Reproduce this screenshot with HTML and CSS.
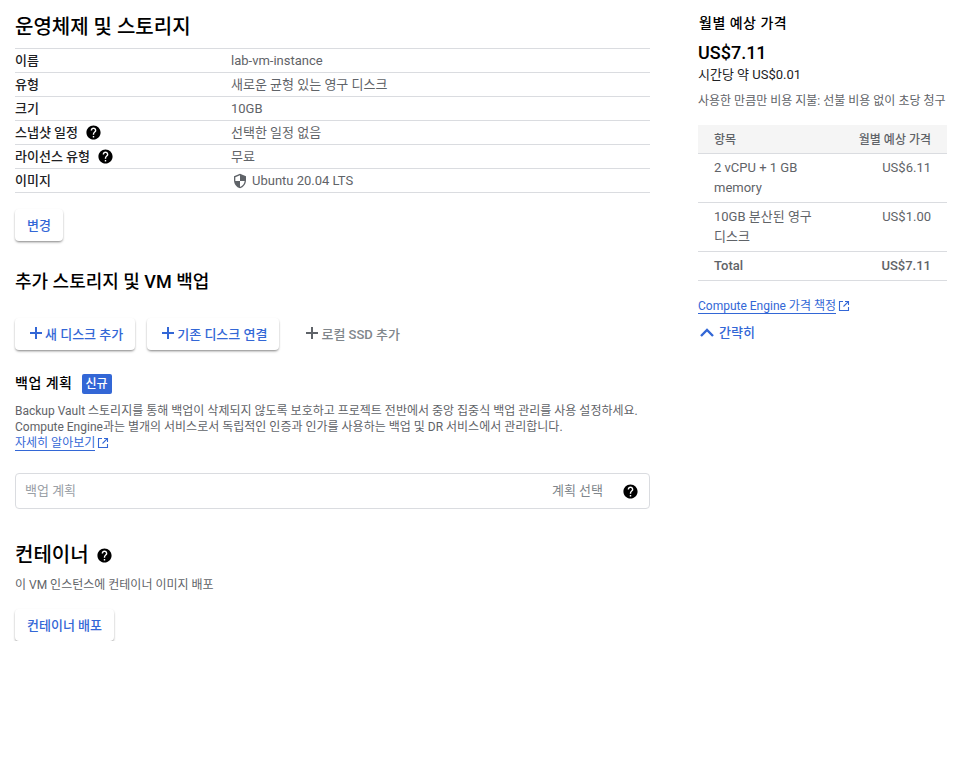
FILE: index.html
```html
<!DOCTYPE html>
<html lang="ko">
<head>
<meta charset="UTF-8">
<meta name="viewport" content="width=device-width, initial-scale=1.0">
<title>VM 인스턴스 만들기</title>
<link rel="stylesheet" href="styles.css">
</head>
<body>

<svg class="defs" aria-hidden="true">
  <symbol id="help" viewBox="0 0 24 24">
    <path d="M12 2C6.48 2 2 6.48 2 12s4.48 10 10 10 10-4.48 10-10S17.52 2 12 2zm1 17h-2v-2h2v2zm2.07-7.75l-.9.92C13.45 12.9 13 13.5 13 15h-2v-.5c0-1.1.45-2.1 1.17-2.83l1.24-1.26c.37-.36.59-.86.59-1.41 0-1.1-.9-2-2-2s-2 .9-2 2H8c0-2.21 1.79-4 4-4s4 1.79 4 4c0 .88-.36 1.68-.93 2.25z"/>
  </symbol>
  <symbol id="external" viewBox="0 0 12 12">
    <path d="M5 1.5H1.5v9h9V7M7 1.5h3.5V5M10.3 1.7L5.5 6.5" fill="none" stroke="currentColor" stroke-width="1.1"/>
  </symbol>
  <symbol id="plus" viewBox="0 0 14 14">
    <path d="M6 1h2v5h5v2H8v5H6V8H1V6h5z"/>
  </symbol>
</svg>

<div class="page">

  <!-- 왼쪽 설정 -->
  <main class="form">
    <h2 class="title">운영체제 및 스토리지</h2>
    <div class="specs">
      <div class="spec"><div class="spec-key">이름</div><div class="spec-val">lab-vm-instance</div></div>
      <div class="spec"><div class="spec-key">유형</div><div class="spec-val">새로운 균형 있는 영구 디스크</div></div>
      <div class="spec"><div class="spec-key">크기</div><div class="spec-val">10GB</div></div>
      <div class="spec"><div class="spec-key">스냅샷 일정<svg class="help"><use href="#help"/></svg></div><div class="spec-val">선택한 일정 없음</div></div>
      <div class="spec"><div class="spec-key">라이선스 유형<svg class="help"><use href="#help"/></svg></div><div class="spec-val">무료</div></div>
      <div class="spec">
        <div class="spec-key">이미지</div>
        <div class="spec-val">
          <svg class="shield" viewBox="0 0 24 24"><path d="M12 1L3 5v6c0 5.55 3.84 10.74 9 12 5.16-1.26 9-6.45 9-12V5l-9-4zm0 10.99h7c-.53 4.12-3.28 7.79-7 8.94V12H5V6.3l7-3.11v8.8z"/></svg>
          Ubuntu 20.04 LTS
        </div>
      </div>
    </div>
    <button class="btn btn-change">변경</button>

    <h3 class="subtitle">추가 스토리지 및 VM 백업</h3>
    <div class="disk-actions">
      <button class="btn btn-icon"><svg class="plus"><use href="#plus"/></svg>새 디스크 추가</button>
      <button class="btn btn-icon"><svg class="plus"><use href="#plus"/></svg>기존 디스크 연결</button>
      <button class="btn-flat"><svg class="plus"><use href="#plus"/></svg>로컬 SSD 추가</button>
    </div>

    <div class="backup-head">
      <span class="backup-title">백업 계획</span>
      <span class="badge">신규</span>
    </div>
    <p class="backup-desc">
      Backup Vault 스토리지를 통해 백업이 삭제되지 않도록 보호하고 프로젝트 전반에서 중앙 집중식 백업 관리를 사용 설정하세요.<br>
      Compute Engine과는 별개의 서비스로서 독립적인 인증과 인가를 사용하는 백업 및 DR 서비스에서 관리합니다.<br>
      <a class="link">자세히 알아보기</a><svg class="ext"><use href="#external"/></svg>
    </p>
    <div class="plan-box">
      <span class="plan-label">백업 계획</span>
      <span class="plan-select">계획 선택</span>
      <svg class="help plan-help"><use href="#help"/></svg>
    </div>

    <h2 class="title container-title">컨테이너<svg class="help"><use href="#help"/></svg></h2>
    <p class="container-desc">이 VM 인스턴스에 컨테이너 이미지 배포</p>
    <button class="btn">컨테이너 배포</button>
  </main>

  <!-- 오른쪽 가격 -->
  <aside class="price">
    <div class="price-head">월별 예상 가격</div>
    <div class="price-total">US$7.11</div>
    <div class="price-hour">시간당 약 US$0.01</div>
    <div class="price-note">사용한 만큼만 비용 지불: 선불 비용 없이 초당 청구</div>
    <table class="price-table">
      <thead>
        <tr><th>항목</th><th class="num">월별 예상 가격</th></tr>
      </thead>
      <tbody>
        <tr><td>2 vCPU + 1 GB memory</td><td class="num">US$6.11</td></tr>
        <tr><td>10GB 분산된 영구 디스크</td><td class="num">US$1.00</td></tr>
        <tr class="sum"><td>Total</td><td class="num">US$7.11</td></tr>
      </tbody>
    </table>
    <div class="price-link"><a class="link">Compute Engine 가격 책정</a><svg class="ext"><use href="#external"/></svg></div>
    <div class="collapse">
      <svg class="chevron" viewBox="0 0 16 10"><path d="M2 9l6-6 6 6" fill="none" stroke="currentColor" stroke-width="2.4"/></svg>
      간략히
    </div>
  </aside>

</div>
</body>
</html>
```

FILE: styles.css
```css
body {
  margin: 0;
  font-family: Roboto, "Noto Sans CJK KR", sans-serif;
  font-size: 13px;
  color: #202124;
  background-color: #fff;
}
.defs {
  display: none;
}
.page {
  display: flex;
  align-items: flex-start;
  padding: 14px 17px 0 15px;
}
.form {
  width: 635px;
  margin-right: 48px;
  flex-shrink: 0;
}
.price {
  width: 249px;
  flex-shrink: 0;
}

.title {
  margin: 0;
  font-size: 20px;
  line-height: 26px;
  font-weight: 500;
  color: #000;
}
.specs {
  margin-top: 8px;
  border-top: 1px solid #dadce0;
}
.spec {
  display: flex;
  height: 23px;
  line-height: 22px;
  border-bottom: 1px solid #dadce0;
}
.spec-key {
  width: 216px;
  font-weight: 500;
  color: #202124;
  display: flex;
  align-items: center;
}
.spec-val {
  color: #5f6368;
  display: flex;
  align-items: center;
}
.help {
  width: 17px;
  height: 17px;
  margin-left: 7px;
  fill: #000;
}
.shield {
  width: 16px;
  height: 16px;
  margin: 0 4px 0 0;
  padding-left: 1px;
  fill: #5f6368;
}

.btn {
  display: inline-flex;
  align-items: center;
  height: 32px;
  padding: 0 12px 2px;
  border: none;
  border-radius: 4px;
  background: #fff;
  font-family: inherit;
  font-size: 13px;
  font-weight: 500;
  color: #3367d6;
  box-shadow: 0 1px 2px rgba(0, 0, 0, .2), 0 2px 3px -1px rgba(0, 0, 0, .35);
  cursor: pointer;
}
.btn-change {
  margin-top: 16px;
}
.subtitle {
  margin: 28px 0 0;
  font-size: 18px;
  line-height: 26px;
  font-weight: 500;
  color: #000;
}
.disk-actions {
  display: flex;
  margin-top: 23px;
}
.btn-icon {
  margin-right: 12px;
  padding: 0 12px 2px 14px;
}
.plus {
  width: 14px;
  height: 14px;
  margin-right: 2px;
  fill: currentColor;
}
.btn-flat {
  display: inline-flex;
  align-items: center;
  height: 32px;
  padding: 0 12px 2px 14px;
  border: none;
  background: none;
  font-family: inherit;
  font-size: 13px;
  font-weight: 500;
  color: #80868b;
}
.btn-flat .plus {
  fill: #5f6368;
}

.backup-head {
  display: flex;
  align-items: center;
  margin-top: 24px;
}
.backup-title {
  margin-bottom: 2px;
  font-size: 14px;
  line-height: 18px;
  font-weight: 500;
  letter-spacing: .5px;
  color: #000;
}
.badge {
  margin-left: 9px;
  padding: 0 4px;
  height: 20px;
  line-height: 20px;
  font-size: 12px;
  font-weight: 500;
  color: #fff;
  background-color: #3367d6;
  border-radius: 2px;
}
.backup-desc {
  margin: 9px 0 0;
  font-size: 12px;
  line-height: 16px;
  color: #5f6368;
}
.link {
  color: #3367d6;
  border-bottom: 1px solid #3367d6;
}
.ext {
  width: 12px;
  height: 12px;
  margin-left: 2px;
  color: #3367d6;
  vertical-align: -2px;
}
.plan-box {
  display: flex;
  align-items: center;
  height: 34px;
  margin-top: 22px;
  padding: 0 10px 0 9px;
  border: 1px solid #dadce0;
  border-radius: 4px;
  font-size: 13px;
  color: #80868b;
}
.plan-label,
.plan-select {
  margin-bottom: 4px;
}
.plan-label {
  color: #9aa0a6;
}
.plan-select {
  margin-left: auto;
}
.plan-help {
  margin-left: 19px;
}
.container-title {
  margin-top: 33px;
  display: flex;
  align-items: center;
}
.container-desc {
  margin: 9px 0 16px;
  font-size: 12px;
  line-height: 16px;
  color: #5f6368;
}

.price-head {
  font-size: 14px;
  line-height: 18px;
  font-weight: 500;
  letter-spacing: .5px;
  color: #000;
  padding-left: 1px;
}
.price-total {
  margin-top: 8px;
  font-size: 18px;
  line-height: 26px;
  font-weight: 500;
  color: #000;
}
.price-hour {
  font-size: 13px;
  line-height: 18px;
}
.price-note {
  margin-top: 9px;
  font-size: 12px;
  line-height: 16px;
  color: #5f6368;
  white-space: nowrap;
}
.price-table {
  width: 100%;
  margin-top: 16px;
  border-collapse: separate;
  border-spacing: 0;
  font-size: 13px;
  color: #5f6368;
}
.price-table th {
  height: 26px;
  padding: 0 16px 2px;
  font-size: 12px;
  font-weight: 500;
  text-align: left;
  background-color: #f5f5f5;
  border-bottom: 1px solid #dadce0;
}
.price-table td {
  padding: 4px 16px;
  line-height: 20px;
  vertical-align: top;
  border-bottom: 1px solid #dadce0;
}
.price-table .num {
  text-align: right;
  white-space: nowrap;
}
.price-table th.num {
  text-align: right;
}
.price-table .sum td {
  font-weight: 500;
}
.price-link {
  margin-top: 17px;
  font-size: 12px;
  line-height: 16px;
}
.collapse {
  display: flex;
  align-items: center;
  margin-top: 8px;
  font-size: 13px;
  font-weight: 500;
  color: #3367d6;
}
.chevron {
  width: 16px;
  height: 10px;
  margin: 0 4px 0 1px;
}
```
